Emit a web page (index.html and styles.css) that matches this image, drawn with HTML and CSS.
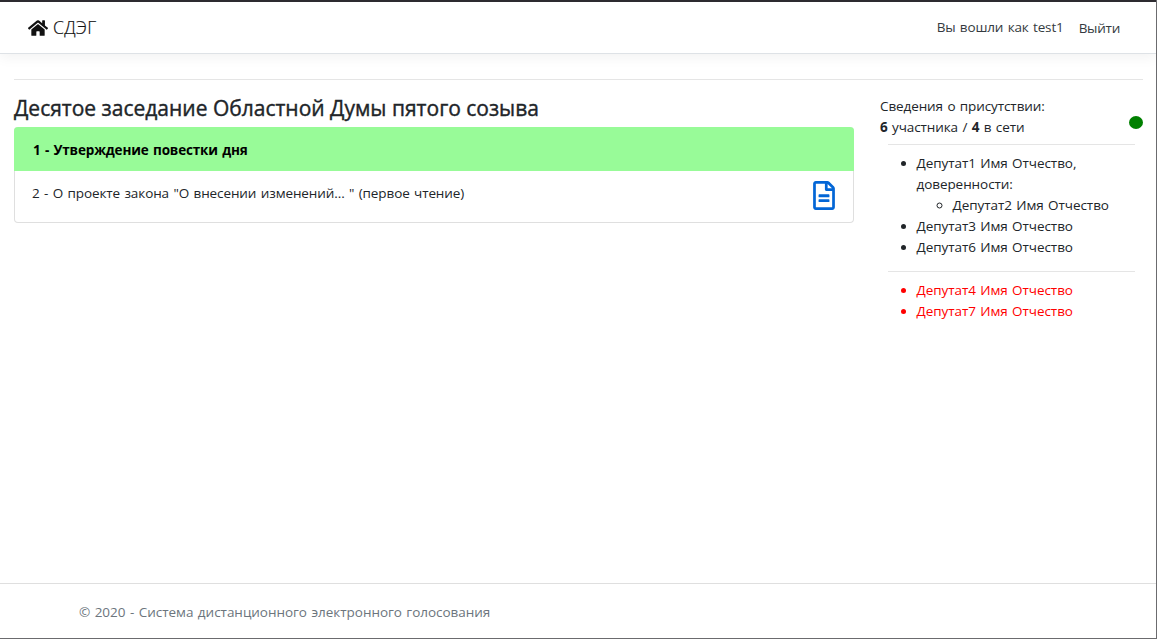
FILE: index.html
```html
<!DOCTYPE html>
<html lang="ru">
<head>
<meta charset="utf-8">
<title>СДЭГ</title>
<link rel="stylesheet" href="styles.css">
</head>
<body>
<div class="page">
  <header class="navbar">
    <a class="brand">
      <svg class="home" viewBox="0 0 576 512" fill="currentColor"><path d="M280.4 148.3L96 300.1V464a16 16 0 0 0 16 16l112-.3a16 16 0 0 0 16-16V368a16 16 0 0 1 16-16h64a16 16 0 0 1 16 16v95.600a16 16 0 0 0 16 16.100L464 480a16 16 0 0 0 16-16V300L295.700 148.300a12.200 12.200 0 0 0-15.300 0zM571.600 251.500L488 182.600V44.100a12 12 0 0 0-12-12h-56a12 12 0 0 0-12 12v72.600L318.500 43a48 48 0 0 0-61 0L4.300 251.500a12 12 0 0 0-1.600 16.900l25.500 31a12 12 0 0 0 16.900 1.600L280.400 107.200a12.200 12.200 0 0 1 15.300 0L531 301a12 12 0 0 0 16.900-1.600l25.500-31a12 12 0 0 0-1.700-16.900z"/></svg>
      <span class="brand-name">СДЭГ</span>
    </a>
    <nav class="account">
      <span class="user">Вы вошли как test1</span>
      <a class="logout">Выйти</a>
    </nav>
  </header>
  <main class="content">
    <section class="meeting">
      <h1 class="title"><span>Десятое заседание Областной Думы пятого созыва</span></h1>
      <div class="agenda">
        <div class="item current"><span>1 - Утверждение повестки дня</span></div>
        <div class="item">
          <span class="item-text">2 - О проекте закона "О внесении изменений... " (первое чтение)</span>
          <svg class="doc" viewBox="0 0 384 512" fill="currentColor"><path d="M288 248v28c0 6.600-5.400 12-12 12H108c-6.600 0-12-5.400-12-12v-28c0-6.600 5.400-12 12-12h168c6.600 0 12 5.400 12 12zm-12 72H108c-6.600 0-12 5.400-12 12v28c0 6.600 5.400 12 12 12h168c6.600 0 12-5.400 12-12v-28c0-6.600-5.400-12-12-12zm108-188.100V464c0 26.500-21.500 48-48 48H48c-26.500 0-48-21.500-48-48V48C0 21.500 21.500 0 48 0h204.100C264.800 0 277 5.100 286 14.100L369.900 98c9 8.900 14.100 21.200 14.100 33.900zm-128-80V128h76.100L256 51.900zM336 464V176H232c-13.300 0-24-10.700-24-24V48H48v416h288z"/></svg>
        </div>
      </div>
    </section>
    <aside class="presence">
      <div class="summary">
        <div>
          <div><span class="caption">Сведения о присутствии:</span></div>
          <div><span class="counts"><b>6</b> участника / <b>4</b> в сети</span></div>
        </div>
        <span class="status"></span>
      </div>
      <ul class="members">
        <li><span>Депутат1 Имя Отчество,</span><br><span class="proxy">доверенности:</span>
          <ul class="proxies"><li><span>Депутат2 Имя Отчество</span></li></ul>
        </li>
        <li><span>Депутат3 Имя Отчество</span></li>
        <li><span>Депутат6 Имя Отчество</span></li>
      </ul>
      <ul class="members absent">
        <li><span>Депутат4 Имя Отчество</span></li>
        <li><span>Депутат7 Имя Отчество</span></li>
      </ul>
    </aside>
  </main>
  <footer class="footer"><span>© 2020 - Система дистанционного электронного голосования</span></footer>
</div>
</body>
</html>
```
FILE: styles.css
```css
* { box-sizing: border-box; }
body {
  margin: 0;
  background: #fff;
  color: #212529;
  font: 13.5px/21px "Open Sans", "Noto Sans", sans-serif;
  letter-spacing: -.1px;
  word-spacing: 1px;
}
ul { margin: 0; padding: 0; }
.page {
  height: 639px;
  display: flex;
  flex-direction: column;
  border: solid #6b6b6e;
  border-width: 0 1px 1px 0;
  overflow: hidden;
}
.navbar {
  height: 54px;
  flex: none;
  display: flex;
  justify-content: space-between;
  align-items: center;
  padding: 0 36px 0 28px;
  border-top: 2px solid #2d2b30;
  border-bottom: 1px solid #dee2e6;
  box-shadow: 0 4px 12px rgba(0, 0, 0, .05);
}
.brand { display: flex; align-items: center; gap: 5px; color: #111; }
.home { width: 20px; height: 18px; }
.brand-name {
  padding-bottom: 2px;
  font-size: 17.5px;
  font-weight: 300;
  line-height: 26px;
  letter-spacing: .4px;
  -webkit-text-stroke: .2px;
}
.account { display: flex; gap: 15px; color: #343a40; }
.user { letter-spacing: -.15px; }
.logout { padding-top: 1px; letter-spacing: -.25px; }
.content {
  flex: 1;
  display: flex;
  justify-content: space-between;
  margin: 25px 13px 0 14px;
  border-top: 1px solid #e5e5e5;
}
.meeting { width: 840px; padding-top: 16px; }
.title {
  margin: 0 0 6px;
  font-size: 21px;
  line-height: 25px;
  font-weight: 400;
  letter-spacing: 0;
  word-spacing: 0;
  -webkit-text-stroke: .4px;
  white-space: nowrap;
}
.agenda { border: 1px solid #dfdfdf; border-top: 0; border-radius: 4px; height: 96px; }
.item { display: flex; justify-content: space-between; padding: 12px 18px 12px 17px; }
.current {
  height: 44px;
  margin: 0 -1px;
  padding: 13px 19px 10px;
  background: #98fb98;
  color: #000;
  font-weight: 700;
  letter-spacing: -.15px;
  border-radius: 4px 4px 0 0;
}
.doc { width: 22px; height: 29px; margin-top: -2px; color: #0366d6; }
.presence { width: 262px; padding-top: 16px; }
.summary { display: flex; justify-content: space-between; align-items: center; height: 42px; margin-left: -1px; }
.status { width: 14px; height: 13px; margin: 10px 0 0; border-radius: 50%; background: #008000; }
.members {
  margin: 6px 8px 0 7px;
  padding: 8px 0 0 28.5px;
  border-top: 1px solid #e5e5e5;
  white-space: nowrap;
  letter-spacing: -.07px;
}
.proxies { padding-left: 36px; }
.absent { margin-top: 13px; color: #f00; }
.footer {
  height: 55px;
  flex: none;
  border-top: 1px solid #dfdfdf;
  padding: 18px 79px;
  color: #6c757d;
  letter-spacing: -.03px;
}
```
